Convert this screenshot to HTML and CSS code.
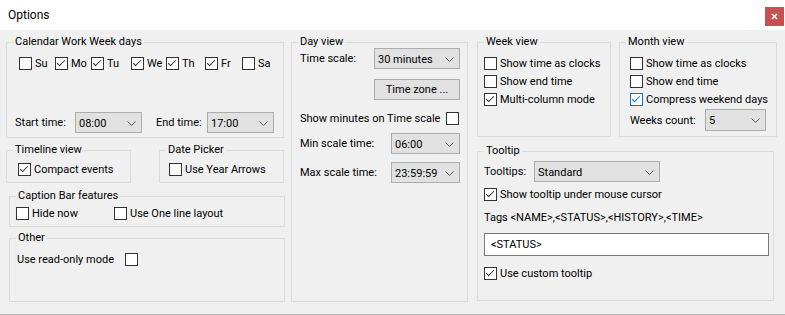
FILE: index.html
```html
<!DOCTYPE html>
<html lang="en">

<head>
  <meta charset="UTF-8">
  <meta name="viewport" content="width=device-width, initial-scale=1.0">
  <title>Options</title>
  <link rel="stylesheet" href="styles.css">
</head>

<body>
  <div class="window">

    <div class="titlebar">
      <span class="title">Options</span>
      <button class="close">
        <svg width="7" height="7" viewBox="0 0 7 7">
          <path d="M1 1 L6 6 M6 1 L1 6" stroke="#fff" stroke-width="1.6" />
        </svg>
      </button>
    </div>

    <div class="content">

      <!-- Left column -->
      <div class="col col-left">

        <div class="group calendar">
          <div class="legend">Calendar Work Week days</div>
          <div class="days">
            <label class="check"><span class="box"></span>Su</label>
            <label class="check on"><span class="box"></span>Mo</label>
            <label class="check on"><span class="box"></span>Tu</label>
            <label class="check on"><span class="box"></span>We</label>
            <label class="check on"><span class="box"></span>Th</label>
            <label class="check on"><span class="box"></span>Fr</label>
            <label class="check"><span class="box"></span>Sa</label>
          </div>
          <div class="row time-row">
            <span class="lbl start-lbl">Start time:</span>
            <div class="combo start-combo">08:00<span class="arrow"><svg width="9" height="5" viewBox="0 0 9 5"><path d="M0.5 0.5 L4.5 4.5 L8.5 0.5" /></svg></span></div>
            <span class="lbl end-lbl">End time:</span>
            <div class="combo end-combo">17:00<span class="arrow"><svg width="9" height="5" viewBox="0 0 9 5"><path d="M0.5 0.5 L4.5 4.5 L8.5 0.5" /></svg></span></div>
          </div>
        </div>

        <div class="pair pair-left">
          <div class="group timeline">
            <div class="legend">Timeline view</div>
            <label class="check on"><span class="box"></span>Compact events</label>
          </div>
          <div class="group picker">
            <div class="legend">Date Picker</div>
            <label class="check"><span class="box"></span>Use Year Arrows</label>
          </div>
        </div>

        <div class="group caption">
          <div class="legend">Caption Bar features</div>
          <div class="row">
            <label class="check hide-now"><span class="box"></span>Hide now</label>
            <label class="check"><span class="box"></span>Use One line layout</label>
          </div>
        </div>

        <div class="group other">
          <div class="legend">Other</div>
          <div class="row">
            <span class="lbl readonly-lbl">Use read-only mode</span>
            <span class="check"><span class="box"></span></span>
          </div>
        </div>

      </div>

      <!-- Middle column -->
      <div class="col col-mid">
        <div class="group dayview">
          <div class="legend">Day view</div>
          <div class="row scale-row">
            <span class="lbl scale-lbl">Time scale:</span>
            <div class="combo scale-combo">30 minutes<span class="arrow"><svg width="9" height="5" viewBox="0 0 9 5"><path d="M0.5 0.5 L4.5 4.5 L8.5 0.5" /></svg></span></div>
          </div>
          <button class="btn zone-btn">Time zone ...</button>
          <div class="row minutes-row">
            <span class="lbl minutes-lbl">Show minutes on Time scale</span>
            <span class="check"><span class="box"></span></span>
          </div>
          <div class="row min-row">
            <span class="lbl range-lbl">Min scale time:</span>
            <div class="combo range-combo">06:00<span class="arrow"><svg width="9" height="5" viewBox="0 0 9 5"><path d="M0.5 0.5 L4.5 4.5 L8.5 0.5" /></svg></span></div>
          </div>
          <div class="row max-row">
            <span class="lbl range-lbl">Max scale time:</span>
            <div class="combo range-combo">23:59:59<span class="arrow"><svg width="9" height="5" viewBox="0 0 9 5"><path d="M0.5 0.5 L4.5 4.5 L8.5 0.5" /></svg></span></div>
          </div>
        </div>
      </div>

      <!-- Right column -->
      <div class="col col-right">

        <div class="pair pair-right">
          <div class="group week">
            <div class="legend">Week view</div>
            <div class="list">
              <label class="check"><span class="box"></span>Show time as clocks</label>
              <label class="check"><span class="box"></span>Show end time</label>
              <label class="check on"><span class="box"></span>Multi-column mode</label>
            </div>
          </div>
          <div class="group month">
            <div class="legend">Month view</div>
            <div class="list">
              <label class="check"><span class="box"></span>Show time as clocks</label>
              <label class="check"><span class="box"></span>Show end time</label>
              <label class="check on focus"><span class="box"></span>Compress weekend days</label>
            </div>
            <div class="row weeks-row">
              <span class="lbl weeks-lbl">Weeks count:</span>
              <div class="combo weeks-combo">5<span class="arrow"><svg width="9" height="5" viewBox="0 0 9 5"><path d="M0.5 0.5 L4.5 4.5 L8.5 0.5" /></svg></span></div>
            </div>
          </div>
        </div>

        <div class="group tooltip">
          <div class="legend">Tooltip</div>
          <div class="row tips-row">
            <span class="lbl tips-lbl">Tooltips:</span>
            <div class="combo tips-combo">Standard<span class="arrow"><svg width="9" height="5" viewBox="0 0 9 5"><path d="M0.5 0.5 L4.5 4.5 L8.5 0.5" /></svg></span></div>
          </div>
          <label class="check on cursor-check"><span class="box"></span>Show tooltip under mouse cursor</label>
          <div class="tags">Tags &lt;NAME&gt;,&lt;STATUS&gt;,&lt;HISTORY&gt;,&lt;TIME&gt;</div>
          <div class="textbox">&lt;STATUS&gt;</div>
          <label class="check on custom-check"><span class="box"></span>Use custom tooltip</label>
        </div>

      </div>

    </div>
  </div>
</body>

</html>
```
FILE: styles.css
```css
body {
  margin: 0;
  padding: 0;
  background-color: #f0f0f0;
  font-family: Roboto, 'Liberation Sans', sans-serif;
  font-size: 11px;
  color: #000;
}

.window {
  width: 785px;
  height: 315px;
  box-sizing: border-box;
  border-bottom: 1px solid #b9b9b9;
}

/* Title bar */
.titlebar {
  height: 30px;
  background-color: #fff;
  display: flex;
  align-items: flex-start;
}

.title {
  flex: 1;
  font-size: 12px;
  line-height: 30px;
  padding-left: 8px;
}

.close {
  width: 19px;
  height: 19px;
  margin: 7px 1px 0 0;
  padding: 0;
  border: 0;
  background-color: #c75050;
  display: flex;
  align-items: center;
  justify-content: center;
}

/* Columns */
.content {
  display: flex;
  padding: 12px 0 0 6px;
}

.col-left {
  width: 279px;
  display: flex;
  flex-direction: column;
}

.col-mid {
  width: 177px;
  margin-left: 6px;
}

.col-right {
  width: 300px;
  margin-left: 9px;
}

/* Group boxes */
.group {
  border: 1px solid #dcdcdc;
  box-sizing: border-box;
}

.legend {
  width: max-content;
  margin: -9px 0 0 6px;
  padding: 0 2px;
  line-height: 16px;
  background-color: #f0f0f0;
}

.pair {
  display: flex;
  justify-content: space-between;
}

.row {
  display: flex;
  align-items: center;
}

.lbl {
  flex: none;
  line-height: 13px;
}

/* Checkboxes */
.check {
  display: flex;
  align-items: center;
  height: 13px;
  line-height: 13px;
  white-space: nowrap;
}

.box {
  flex: none;
  width: 13px;
  height: 13px;
  box-sizing: border-box;
  border: 1px solid #333;
  background-color: #fff;
  margin-right: 3px;
}

.check.on .box::after {
  content: '';
  display: block;
  width: 7px;
  height: 3px;
  margin: 2px 0 0 1px;
  border-left: 1px solid #333;
  border-bottom: 1px solid #333;
  transform: rotate(-45deg);
}

.check.focus .box {
  border-color: #0078d7;
}

.check.focus .box::after {
  border-color: #0078d7;
}

/* Combo boxes and buttons */
.combo {
  flex: none;
  display: flex;
  align-items: center;
  justify-content: space-between;
  height: 21px;
  box-sizing: border-box;
  padding: 1px 5px 0 3px;
  border: 1px solid #adadad;
  background-color: #e1e1e1;
  white-space: nowrap;
}

.arrow {
  display: flex;
}

.arrow path {
  fill: none;
  stroke: #5a5a5a;
  stroke-width: 1;
}

.btn {
  display: block;
  height: 21px;
  padding: 0;
  border: 1px solid #adadad;
  background-color: #e1e1e1;
  font-family: inherit;
  font-size: 11px;
  color: #000;
}

/* Calendar */
.calendar {
  width: 278px;
  height: 96px;
}

.days {
  display: grid;
  grid-template-columns: 36px 36px 40px 35px 39px 37px auto;
  margin: 7px 0 0 12px;
}

.time-row {
  margin: 42px 0 0 8px;
}

.start-lbl {
  width: 60px;
}

.end-lbl {
  width: 51px;
  margin-left: 14px;
}

.start-combo,
.end-combo {
  width: 67px;
}

/* Timeline / Date picker */
.pair-left {
  width: 278px;
  margin-top: 12px;
}

.timeline,
.picker {
  width: 125px;
  height: 33px;
}

.timeline .check {
  margin: 5px 0 0 11px;
}

.picker .check {
  margin: 5px 0 0 9px;
}

/* Caption bar */
.caption {
  width: 276px;
  height: 31px;
  margin: 13px 0 0 3px;
}

.caption .row {
  margin: 3px 0 0 6px;
}

.hide-now {
  width: 98px;
}

/* Other */
.other {
  width: 276px;
  height: 64px;
  margin: 11px 0 0 3px;
}

.other .row {
  margin: 7px 0 0 7px;
}

.readonly-lbl {
  width: 108px;
}

/* Day view */
.dayview {
  height: 260px;
}

.scale-row {
  margin: -2px 0 0 8px;
}

.scale-lbl {
  width: 74px;
}

.scale-combo {
  width: 86px;
}

.zone-btn {
  width: 86px;
  margin: 10px 0 0 82px;
}

.minutes-row {
  margin: 12px 0 0 8px;
}

.minutes-lbl {
  width: 146px;
}

.min-row {
  margin: 8px 0 0 8px;
}

.max-row {
  margin: 8px 0 0 8px;
}

.range-lbl {
  width: 91px;
}

.range-combo {
  width: 69px;
}

/* Week / Month */
.pair-right {
  justify-content: flex-start;
  gap: 8px;
}

.week {
  width: 134px;
  height: 95px;
}

.month {
  width: 158px;
  height: 95px;
}

.list {
  display: flex;
  flex-direction: column;
  gap: 5px;
  margin-top: 7px;
}

.week .list {
  padding-left: 6px;
}

.month .list {
  padding-left: 10px;
}

.weeks-row {
  margin: 3px 0 0 10px;
}

.weeks-lbl {
  width: 75px;
}

.weeks-combo {
  width: 61px;
  height: 22px;
}

/* Tooltip */
.tooltip {
  width: 297px;
  height: 150px;
  margin-top: 14px;
  padding-left: 6px;
}

.tooltip .legend {
  margin-left: 0;
}

.tips-row {
  margin-top: 2px;
}

.tips-lbl {
  width: 50px;
}

.tips-combo {
  width: 126px;
}

.cursor-check {
  margin-top: 6px;
}

.tags {
  margin-top: 9px;
  line-height: 16px;
}

.textbox {
  width: 285px;
  height: 23px;
  box-sizing: border-box;
  margin-top: 7px;
  padding-left: 6px;
  line-height: 21px;
  border: 1px solid #7a7a7a;
  background-color: #fff;
}

.custom-check {
  margin-top: 11px;
}
```
